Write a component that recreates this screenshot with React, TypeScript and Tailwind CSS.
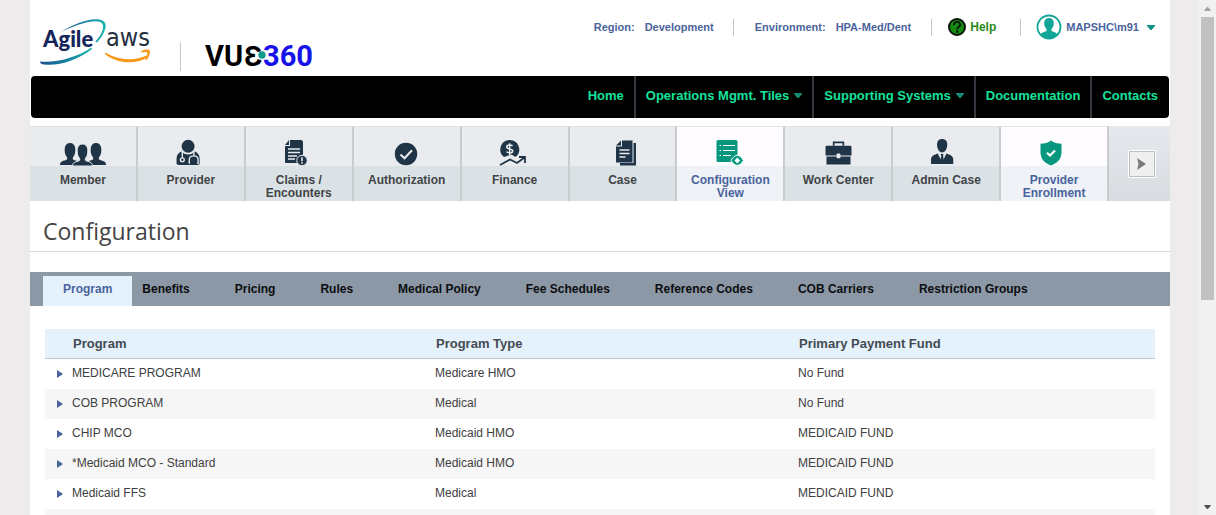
import React from "react";

const Caret = ({ className }: { className: string }) => (
  <svg viewBox="0 0 8 5" className={className} fill="currentColor" aria-hidden="true">
    <path d="M0 0h8v1L4.6 5H3.4L0 1z" />
  </svg>
);

const Divider = () => <span className="h-[17px] w-px bg-[#c8c8c8]" />;

const PartnerLogos = () => (
  <svg width="114" height="48" viewBox="0 0 114 48" role="img" aria-label="Agile AWS">
    <defs>
      <linearGradient id="swoosh" x1="0" x2="1">
        <stop offset="0" stopColor="#1c4f8f" />
        <stop offset="1" stopColor="#14b3ae" />
      </linearGradient>
    </defs>
    <path
      d="M20 14.500C32 6.500 46 1.500 56 1.200C65 1 67.500 6 64.500 13C63 17 60 21 57 24.500L55.500 23.500C58.500 20 61 16.500 62.500 12.500C64.500 6 62 3.200 55.500 3.200C45 3.500 32 8.500 20 14.500Z"
      fill="url(#swoosh)"
    />
    <path
      d="M0 43.500C16 45 36 40 51.500 29.500L52 31C38 42 18 48.500 4 46.500C2 46.200 0 45.500 0 43.500Z"
      fill="url(#swoosh)"
    />
    <text x="3" y="29" fontFamily="Lato, sans-serif" fontSize="22" fontWeight="900" fill="#14255c">Agile</text>
    <text x="66" y="28" fontFamily="'DejaVu Sans Condensed', 'Noto Sans', sans-serif" fontSize="25" fontWeight="400" fill="#252f3e">aws</text>
    <path d="M65.500 34.500C78 42.500 94 43.500 107 37.200L108.500 39C96 47 77 46 65 36Z" fill="#f79a1c" />
    <path d="M101 33.500C104 31.200 108.500 31 109.800 32.200C110.600 34 109 39.500 106.500 42L105.300 41.500C106.800 38.500 107.800 35.500 107 34.500C106.200 33.800 103.500 34.200 101.300 34.600Z" fill="#f79a1c" />
  </svg>
);

const VueLogo = () => (
  <svg width="112" height="40" viewBox="0 0 112 40" role="img" aria-label="VUE 360">
    <g fontFamily="Roboto, sans-serif" fontSize="29" fontWeight="700">
      <text x="0" y="31" fill="#000">VU</text>
      <text x="39" y="31" fill="#000">Ɛ</text>
      <text x="58" y="31" fill="#1712ea">360</text>
    </g>
    <circle cx="57" cy="20" r="3.700" fill="#12998a" />
  </svg>
);

const bust = "M0 22c0-3 2-4 6-5 1.500-.5 1.500-2 .8-3C5 12 4.500 9 4.700 5.500 5 2 7 0 10 0s5 2 5.300 5.500c.2 3.500-.3 6.500-2.100 8.500-.7 1-.7 2.500.8 3 4 1 6 2 6 5z";

const icons: Record<string, React.ReactNode> = {
  member: (
    <svg width="46" height="25" viewBox="0 0 46 25" fill="#1f3547">
      <path d={bust} transform="translate(0 2)" />
      <path d={bust} transform="translate(26 2)" />
      <path d={bust} transform="translate(12.500 3)" stroke="#e9ebee" strokeWidth="1" />
    </svg>
  ),
  provider: (
    <svg width="32" height="27" viewBox="0 0 32 28">
      <circle cx="13" cy="7.500" r="6.700" fill="#1f3547" />
      <path d="M6 13c2 2 4 3 7 3s5-1 7-3c3.500 1.500 5 4 5 8v4c0 1.500-1 2-2.500 2h-19C2 27 1 26.500 1 25v-4c0-4 1.500-6.500 5-8z" fill="#1f3547" />
      <g fill="none" stroke="#e9ebee" strokeWidth="1.400">
        <path d="M7 13.500v6" />
        <circle cx="7" cy="21.500" r="2" />
        <path d="M19 13.500v4M15 25h-.8v-3.500c0-2.500 2-4 4.600-4s4.600 1.500 4.600 4V25h-1.200" />
      </g>
    </svg>
  ),
  claims: (
    <svg width="29" height="26" viewBox="0 0 29 26">
      <path d="M6 0h11a2 2 0 0 1 2 2v21H2a1 1 0 0 1-1-1V6h5z" fill="#1f3547" />
      <path d="M1 5l4-5v5z" fill="#1f3547" />
      <path d="M4 9h12M4 12.500h12M4 16h9M4 19h7" stroke="#e9ebee" strokeWidth="1.300" />
      <circle cx="18" cy="20.500" r="5.200" fill="#1f3547" stroke="#e9ebee" />
      <path d="M18 17.300v4M18 22.300v1.500" stroke="#e9ebee" strokeWidth="1.600" />
    </svg>
  ),
  authorization: (
    <svg width="26" height="24" viewBox="0 0 26 24">
      <circle cx="12" cy="12" r="11.200" fill="#1f3547" />
      <path d="M6.500 12.500l4 3.800 7.500-8" fill="none" stroke="#e9ebee" strokeWidth="2" />
    </svg>
  ),
  finance: (
    <svg width="31" height="26" viewBox="0 0 31 26">
      <path d="M10.500 0a9.500 9.500 0 0 1 6 17l-4-2.500L5 17A9.500 9.500 0 0 1 10.500 0z" fill="#1f3547" />
      <path d="M13.500 6c-.8-1.300-5.800-1.600-5.800.9 0 2.800 6 1.200 6 4 0 2.500-5 2.300-6.200.7M10.600 3.200v12" fill="none" stroke="#e9ebee" strokeWidth="1.500" />
      <path d="M1 25l10-5.500 7 3.500 7.500-5.500M20 17h6v6" fill="none" stroke="#1f3547" strokeWidth="1.800" />
    </svg>
  ),
  caseFile: (
    <svg width="30" height="26" viewBox="-8 0 30 26">
      <path d="M18.500 3H21v22.500H5V23h13.500z" fill="#1f3547" />
      <path d="M7 .5h10.500v22H1V6.500h6z" fill="#1f3547" />
      <path d="M1 5.500l5-5v5z" fill="#1f3547" />
      <path d="M4.500 10h10M4.500 13.500h10M4.500 17h6" stroke="#e9ebee" strokeWidth="1.400" />
    </svg>
  ),
  configuration: (
    <svg width="29" height="26" viewBox="0 0 29 26">
      <path d="M2 0h18a1.500 1.500 0 0 1 1.500 1.500V15c-3 .5-5.500 3-6.500 7H2A1.500 1.500 0 0 1 .5 20.500v-19A1.500 1.500 0 0 1 2 0z" fill="#07977f" />
      <path d="M3.500 5.500H5M7 5.500h12M3.500 10.500H5M7 10.500h12M3.500 15.500H5M7 15.500h8" stroke="#fff" strokeWidth="1.200" />
      <path d="M15 20.500c4-7 8.500-7 12.500 0-4 6.500-8.500 6.500-12.500 0z" fill="#07977f" stroke="#fefcff" />
      <path d="M21.300 17.500l2.800 3-2.800 3-2.800-3z" fill="#fff" />
    </svg>
  ),
  work: (
    <svg width="27" height="25" viewBox="0 0 28 26">
      <path d="M9 5V1.500h10V5" fill="none" stroke="#1f3547" strokeWidth="1.800" />
      <path d="M2 5h24a1.500 1.500 0 0 1 1.500 1.500V15h-27V6.500A1.500 1.500 0 0 1 2 5zM1.500 16h25v8.500h-25z" fill="#1f3547" />
      <rect x="12" y="13" width="4" height="5" rx="1" fill="#e9ebee" />
    </svg>
  ),
  admin: (
    <svg width="34" height="27" viewBox="0 0 34 28">
      <path d="M13 0c3.500 0 5.300 2.300 5.300 5.700 0 4-2 8.300-5.300 8.300S7.700 9.700 7.700 5.700C7.700 2.300 9.500 0 13 0z" fill="#1f3547" />
      <path d="M8.500 15L13 24l4.500-9c3.500 1.300 7 2.500 7 6v5h-23v-5c0-3.500 3.500-4.700 7-6z" fill="#1f3547" />
      <path d="M11.500 15.500h3l-.6 2 1 4.500-1.900 3-1.900-3 1-4.500z" fill="#1f3547" />
    </svg>
  ),
  enrollment: (
    <svg width="28" height="26" viewBox="0 0 28 26">
      <path d="M11 .5c3 2.300 6.500 3 10.500 3.200v8.500c0 6.500-4 10.800-10.500 13.300C4.500 23 .5 18.700.5 12.200V3.700C4.500 3.500 8 2.800 11 .5z" fill="#07977f" />
      <path d="M7 12.800l3 2.700 5-5" fill="none" stroke="#fff" strokeWidth="2.200" />
    </svg>
  ),
};

const tiles = [
  { label: "Member", icon: "member" },
  { label: "Provider", icon: "provider" },
  { label: "Claims / Encounters", icon: "claims" },
  { label: "Authorization", icon: "authorization" },
  { label: "Finance", icon: "finance" },
  { label: "Case", icon: "caseFile" },
  { label: "Configuration View", icon: "configuration", active: true },
  { label: "Work Center", icon: "work" },
  { label: "Admin Case", icon: "admin" },
  { label: "Provider Enrollment", icon: "enrollment", active: true },
];

const menu = [
  { label: "Home" },
  { label: "Operations Mgmt. Tiles", caret: true },
  { label: "Supporting Systems", caret: true },
  { label: "Documentation" },
  { label: "Contacts" },
];

const tabs = ["Benefits", "Pricing", "Rules", "Medical Policy", "Fee Schedules", "Reference Codes", "COB Carriers", "Restriction Groups"];

const programs = [
  ["MEDICARE PROGRAM", "Medicare HMO", "No Fund"],
  ["COB PROGRAM", "Medical", "No Fund"],
  ["CHIP MCO", "Medicaid HMO", "MEDICAID FUND"],
  ["*Medicaid MCO - Standard", "Medicaid HMO", "MEDICAID FUND"],
  ["Medicaid FFS", "Medical", "MEDICAID FUND"],
];

const Header = () => (
  <header className="flex h-[76px] justify-between pr-[15px] pl-[10px]">
    <div className="flex items-start">
      <div className="pt-[18px]"><PartnerLogos /></div>
      <span className="mt-[42px] ml-[26px] h-[29px] w-px bg-[#c8c8c8]" />
      <div className="mt-[35px] ml-6"><VueLogo /></div>
    </div>
    <div className="flex h-[54px] items-center text-[11px] font-bold text-[#4a639c]">
      <span>Region:</span>
      <span className="mr-[19px] ml-[10px]">Development</span>
      <Divider />
      <span className="ml-[21px]">Environment:</span>
      <span className="mr-5 ml-[10px]">HPA-Med/Dent</span>
      <Divider />
      <a href="#help" className="mr-6 ml-4 flex items-center gap-1 text-[12px] text-[#2c8a1c]">
        <svg width="18" height="18" viewBox="0 0 18 18" aria-hidden="true">
          <circle cx="9" cy="9" r="8" fill="#158a12" stroke="#061306" strokeWidth="2" />
          <path d="M6 7c0-4 6.200-4 6.200-.3C12.200 9 9.200 8.800 9.200 11.500" fill="none" stroke="#061306" strokeWidth="1.800" />
          <circle cx="9.200" cy="13.800" r="1.200" fill="#061306" />
        </svg>
        Help
      </a>
      <Divider />
      <button className="ml-[15px] flex items-center gap-1">
        <svg width="26" height="26" viewBox="0 0 26 26" aria-hidden="true">
          <circle cx="13" cy="13" r="11.500" fill="#fff" stroke="#12a698" strokeWidth="1.800" />
          <path d="M4.500 20.500c1-2 3.500-2.500 5.500-3.300.9-.5.700-1.700.2-2.500C8.800 13 8 11 8.200 8.500 8.500 5.500 10.300 4 13 4s4.500 1.500 4.800 4.500c.2 2.500-.6 4.500-2 6.200-.5.800-.7 2 .2 2.500 2 .8 4.500 1.300 5.500 3.300C19.500 23 16.500 24.300 13 24.300S6.500 23 4.500 20.500z" fill="#12a698" />
        </svg>
        MAPSHC\m91
        <Caret className="ml-1 h-[5px] w-2 text-[#12938a]" />
      </button>
    </div>
  </header>
);

const ScrollBar = () => (
  <div className="flex w-[17px] flex-none flex-col items-center bg-[#f1f1f1]" aria-hidden="true">
    <span className="flex h-[17px] items-center"><Caret className="h-1 w-[7px] rotate-180 text-[#a3a3a3]" /></span>
    <span className="h-[55%] w-[13px] bg-[#c1c1c1]" />
    <span className="mt-auto flex h-[17px] items-center"><Caret className="h-1 w-[7px] text-[#505050]" /></span>
  </div>
);

export default function App() {
  return (
    <div className="flex h-screen overflow-hidden bg-[#edebec] font-['Liberation_Sans',Arial,sans-serif]">
      <main className="mr-[29px] ml-[30px] h-full min-w-0 flex-1 overflow-hidden bg-white">
        <Header />
        <nav aria-label="Main" className="mx-px flex h-[42px] justify-end divide-x-2 divide-[#35393f] overflow-hidden rounded bg-black pr-px text-[13px] font-bold text-[#16e39b]">
          {menu.map((m) => (
            <a key={m.label} href="#menu" className="flex items-center gap-[5px] px-[10px] pb-[3px]">
              {m.label}
              {m.caret && <Caret className="h-[5px] w-2 text-[#168a72]" />}
            </a>
          ))}
        </nav>
        <nav aria-label="Modules" className="mt-2 flex h-[75px]">
          {tiles.map((t) => (
            <a
              key={t.label}
              href="#module"
              className={`flex flex-1 flex-col border-t border-r-2 border-t-[#dfe1e3] border-r-[#c9cccf] text-center text-[12px] leading-[13px] font-bold ${t.active ? "bg-[#eff2f6] text-[#4a639c]" : "bg-[#dbe2e5] text-[#414447]"}`}
            >
              <span className={`flex h-[39px] items-end justify-center ${t.active ? "bg-[#fefcff]" : "bg-[#e9ebee]"}`}>{icons[t.icon]}</span>
              <span className="px-3 pt-2">{t.label}</span>
            </a>
          ))}
          <div className="flex w-[61px] items-center justify-center bg-linear-to-b from-[#e6e9ed] to-[#d7dce0]">
            <button aria-label="Next modules" className="ml-1 flex size-[26px] items-center justify-center border border-[#bdbdbd] bg-[#efefef] outline outline-white">
              <svg width="9" height="12" viewBox="0 0 9 12" fill="#7b7b7b"><path d="M0 0l9 6-9 6 1.500-6z" /></svg>
            </button>
          </div>
        </nav>
        <h1 className="h-[51px] border-b border-[#d9d9d9] pt-[14px] pl-[13px] font-['Open_Sans',sans-serif] text-[23px] leading-8 text-[#444]">Configuration</h1>
        <div role="tablist" className="mt-5 flex h-[34px] items-stretch bg-[#8c98a5] pl-[13px] text-[12px] font-bold text-[#0b0d10]">
          <button role="tab" aria-selected="true" className="mt-1 bg-[#e5f2fc] px-5 pb-1 text-[#4a639c]">Program</button>
          <div className="ml-[10px] flex gap-[45px]">
            {tabs.map((t) => (
              <button key={t} role="tab" aria-selected="false">{t}</button>
            ))}
          </div>
        </div>
        <div className="px-[15px] pt-[23px]">
          <table className="w-full table-fixed border-separate border-spacing-0 text-left text-[12px] text-[#3e4042]">
            <colgroup>
              <col className="w-[26px]" />
              <col className="w-[363px]" />
              <col className="w-[363px]" />
              <col />
            </colgroup>
            <thead>
              <tr className="h-[30px] bg-[#e5f2fc] text-[13px] text-[#444b52]">
                <td className="border-b border-[#bcc6d0]" />
                <th className="border-b border-[#bcc6d0] pl-0.5">Program</th>
                <th className="border-b border-[#bcc6d0] pl-0.5">Program Type</th>
                <th className="border-b border-[#bcc6d0] pl-0.5">Primary Payment Fund</th>
              </tr>
            </thead>
            <tbody>
              {programs.map((p) => (
                <tr key={p[0]} className="h-[30px] even:bg-[#f6f6f6]">
                  <td>
                    <button aria-label={`Expand ${p[0]}`} className="ml-3 block">
                      <svg width="6" height="8" viewBox="0 0 6 8" fill="#4a639c"><path d="M0 0l6 4-6 4z" /></svg>
                    </button>
                  </td>
                  <td className="pb-0.5 pl-px">{p[0]}</td>
                  <td className="pb-0.5 pl-px">{p[1]}</td>
                  <td className="pb-0.5 pl-px">{p[2]}</td>
                </tr>
              ))}
              <tr className="h-[30px] even:bg-[#f6f6f6]"><td colSpan={4} /></tr>
            </tbody>
          </table>
        </div>
      </main>
      <ScrollBar />
    </div>
  );
}
